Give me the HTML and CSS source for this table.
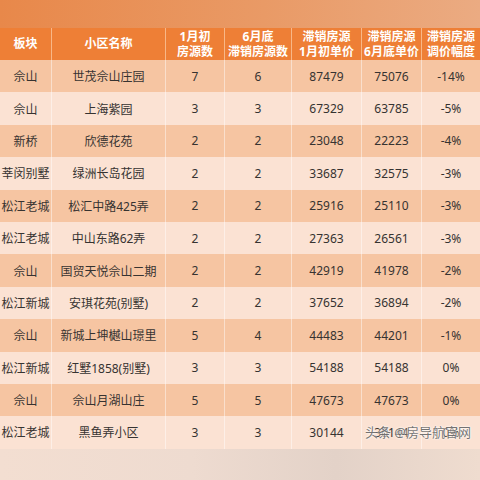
FILE: index.html
```html
<!DOCTYPE html>
<html lang="zh">
<head>
  <meta charset="UTF-8">
  <title>滞销房源调价</title>
  <link rel="stylesheet" href="styles.css">
</head>
<body>

<div class="page">
  <div class="top-band"></div>

  <div class="sheet">
    <div class="row head">
      <div class="cell">板块</div>
      <div class="cell">小区名称</div>
      <div class="cell">1月初<br>房源数</div>
      <div class="cell">6月底<br>滞销房源数</div>
      <div class="cell">滞销房源<br>1月初单价</div>
      <div class="cell">滞销房源<br>6月底单价</div>
      <div class="cell">滞销房源<br>调价幅度</div>
    </div>

    <div class="row dark">
      <div class="cell">佘山</div><div class="cell">世茂佘山庄园</div><div class="cell">7</div><div class="cell">6</div><div class="cell">87479</div><div class="cell">75076</div><div class="cell">-14%</div>
    </div>
    <div class="row light">
      <div class="cell">佘山</div><div class="cell">上海紫园</div><div class="cell">3</div><div class="cell">3</div><div class="cell">67329</div><div class="cell">63785</div><div class="cell">-5%</div>
    </div>
    <div class="row dark">
      <div class="cell">新桥</div><div class="cell">欣德花苑</div><div class="cell">2</div><div class="cell">2</div><div class="cell">23048</div><div class="cell">22223</div><div class="cell">-4%</div>
    </div>
    <div class="row light">
      <div class="cell">莘闵别墅</div><div class="cell">绿洲长岛花园</div><div class="cell">2</div><div class="cell">2</div><div class="cell">33687</div><div class="cell">32575</div><div class="cell">-3%</div>
    </div>
    <div class="row dark">
      <div class="cell">松江老城</div><div class="cell">松汇中路425弄</div><div class="cell">2</div><div class="cell">2</div><div class="cell">25916</div><div class="cell">25110</div><div class="cell">-3%</div>
    </div>
    <div class="row light">
      <div class="cell">松江老城</div><div class="cell">中山东路62弄</div><div class="cell">2</div><div class="cell">2</div><div class="cell">27363</div><div class="cell">26561</div><div class="cell">-3%</div>
    </div>
    <div class="row dark">
      <div class="cell">佘山</div><div class="cell">国贸天悦佘山二期</div><div class="cell">2</div><div class="cell">2</div><div class="cell">42919</div><div class="cell">41978</div><div class="cell">-2%</div>
    </div>
    <div class="row light">
      <div class="cell">松江新城</div><div class="cell">安琪花苑(别墅)</div><div class="cell">2</div><div class="cell">2</div><div class="cell">37652</div><div class="cell">36894</div><div class="cell">-2%</div>
    </div>
    <div class="row dark">
      <div class="cell">佘山</div><div class="cell">新城上坤樾山璟里</div><div class="cell">5</div><div class="cell">4</div><div class="cell">44483</div><div class="cell">44201</div><div class="cell">-1%</div>
    </div>
    <div class="row light">
      <div class="cell">松江新城</div><div class="cell">红墅1858(别墅)</div><div class="cell">3</div><div class="cell">3</div><div class="cell">54188</div><div class="cell">54188</div><div class="cell">0%</div>
    </div>
    <div class="row dark">
      <div class="cell">佘山</div><div class="cell">佘山月湖山庄</div><div class="cell">5</div><div class="cell">5</div><div class="cell">47673</div><div class="cell">47673</div><div class="cell">0%</div>
    </div>
    <div class="row light">
      <div class="cell">松江老城</div><div class="cell">黑鱼弄小区</div><div class="cell">3</div><div class="cell">3</div><div class="cell">30144</div><div class="cell">30144</div><div class="cell">0%</div>
    </div>

    <!-- 水印 -->
    <div class="watermark">头条 @房导航官网</div>
  </div>

  <div class="bottom-band"></div>
</div>

</body>
</html>
```

FILE: styles.css
```css
body {
  margin: 0;
  padding: 0;
  font-family: "Noto Sans", "Noto Sans CJK SC", sans-serif;
  background: #f2ddd0;
}

.page {
  width: 480px;
  height: 480px;
  display: flex;
  flex-direction: column;
  overflow: hidden;
}

.top-band {
  height: 28px;
  flex-shrink: 0;
  background: linear-gradient(to right, #e8884a 0%, #e99a66 55%, #ebab82 100%);
}

.sheet {
  position: relative;
  flex-shrink: 0;
}

.row {
  display: grid;
  grid-template-columns: 52px 114px 59px 67px 70px 60px 58px;
  height: 32.4px;
  color: #363331;
  font-size: 12px;
}

.row.head {
  height: 32px;
  background: #ee7f36;
  color: #ffffff;
  font-weight: bold;
  line-height: 15.5px;
}

.row.dark {
  background: #f6c5a2;
}

.row.light {
  background: #fbe2d3;
}

.cell {
  display: flex;
  align-items: center;
  justify-content: center;
  text-align: center;
  white-space: nowrap;
  border-right: 1px solid rgba(255, 255, 255, 0.45);
}

.cell:last-child {
  border-right: none;
}

.head .cell {
  border-right-color: rgba(255, 220, 190, 0.6);
}

.watermark {
  position: absolute;
  right: 9px;
  bottom: 8px;
  font-size: 13px;
  color: rgba(70, 70, 70, 0.75);
  text-shadow: 0 0 2px #ffffff, 0 0 2px #ffffff;
}

.bottom-band {
  flex: 1;
  background: linear-gradient(to right, #f3ded1 0%, #eedbd0 40%, #e3d2c8 70%, #efdccf 100%);
}
```
